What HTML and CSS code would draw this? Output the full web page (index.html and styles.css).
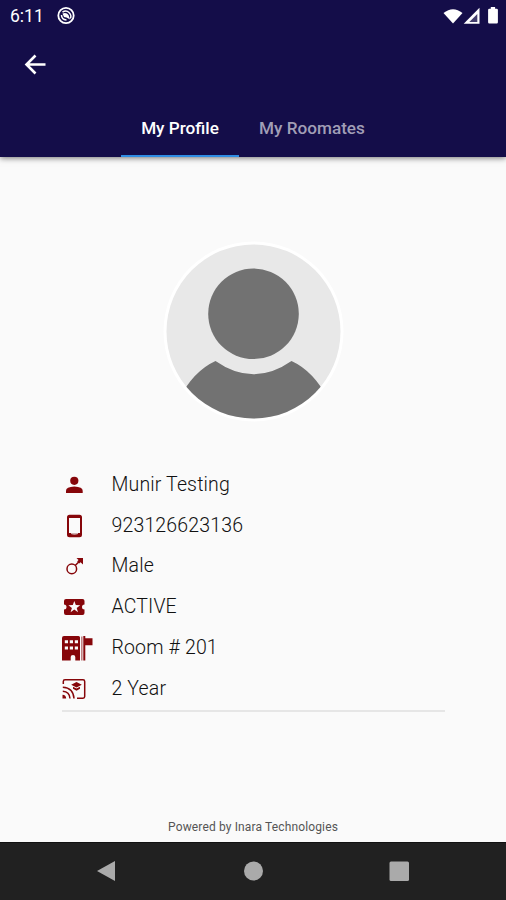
FILE: index.html
```html
<!DOCTYPE html>
<html lang="en">
<head>
<meta charset="utf-8">
<title>My Profile</title>
<link rel="stylesheet" href="styles.css">
</head>
<body>
<div class="screen">
  <header class="header">
    <div class="status">
      <span class="time">6:11</span>
      <svg class="status-app" width="20" height="20" viewBox="0 0 20 20"><circle cx="10" cy="9.500" r="7.700" fill="none" stroke="#fff" stroke-width="1.800"/><path d="M6.500 6.200Q10 3.500 13 6.500t1.300 6M5.500 9q0 4.500 5 5" fill="none" stroke="#fff" stroke-width="1.500"/><path d="M6.500 7.500q4-1.500 6 1.500l1.500 4.500-3.500-2-2.500-.5z" fill="#fff"/></svg>
      <svg class="signals" width="58" height="20" viewBox="0 0 58 20"><path d="M2.500 7Q12-.7 21.500 7L12 17.500z" fill="#fff"/><path d="M38.500 1.700v16H22.700z" fill="#fff"/><path d="M36.300 8v8h-8z" fill="#140d49" opacity=".8"/><path d="M49.800 1h4.300v1.800h1.600q1.200 0 1.200 1.200v12.300q0 1.200-1.200 1.200h-7.400q-1.200 0-1.200-1.200V4q0-1.200 1.200-1.200h1.500z" fill="#fff"/></svg>
    </div>
    <div class="toolbar">
      <svg width="24" height="24" viewBox="0 0 24 24"><path d="M22.500 12.500H4M12.500 3.500l-9 9 9 9" fill="none" stroke="#fff" stroke-width="2.600"/></svg>
    </div>
    <nav class="tabs">
      <div class="tab active"><span>My Profile</span></div>
      <div class="tab"><span>My Roomates</span></div>
    </nav>
  </header>
  <main class="main">
    <svg class="avatar" width="184" height="184" viewBox="0 0 184 184">
      <defs><clipPath id="disc"><circle cx="91.500" cy="92.500" r="87"/></clipPath></defs>
      <circle cx="91.500" cy="92.500" r="90" fill="#fff"/>
      <circle cx="91.500" cy="92.500" r="87" fill="#e8e8e8"/>
      <path clip-path="url(#disc)" d="M17 160Q31.500 132 53.500 122Q91.500 148.500 129.500 122Q151.500 132 166 160V184H17z" fill="#727272"/>
      <circle cx="91.500" cy="74.800" r="45.300" fill="#727272"/>
    </svg>
    <ul class="details">
      <li><svg class="icon" viewBox="0 0 34 30"><circle cx="14.300" cy="10.800" r="4.100"/><path d="M6 23v-2.200q0-4 8.300-4.400 8.400.4 8.400 4.400V23z"/></svg><span>Munir Testing</span></li>
      <li><svg class="icon" viewBox="0 0 34 30"><path fill-rule="evenodd" d="M9.500 3.800h10q2.500 0 2.500 2.500v17.500q0 2.500-2.500 2.500h-10Q7 26.300 7 23.800V6.300q0-2.500 2.500-2.500zM9 7v15h11V7z"/><path class="base" d="M11 22h7v1q-3.500 1.500-7 0z"/></svg><span>923126623136</span></li>
      <li><svg class="icon line" viewBox="0 0 34 30"><circle cx="11.800" cy="17.900" r="4.800"/><path d="m15.200 14.500 6-6"/><path class="solid" d="M16.500 7H23v6.500l-2.500-2.300-1.300 1.200-2-2 1.300-1.300z"/></svg><span>Male</span></li>
      <li><svg class="icon" viewBox="0 0 34 30"><path d="M6 7h16.500q2 0 2 2v3.500a2.500 2.500 0 0 0 0 5V21q0 2-2 2H6q-2 0-2-2v-3.500a2.500 2.500 0 0 0 0-5V9q0-2 2-2z"/><path class="cut" d="m14.300 9 1.500 4.100 4.400.1-3.500 2.700 1.300 4.300-3.700-2.600-3.700 2.600 1.300-4.300-3.500-2.700 4.400-.1z"/></svg><span>ACTIVE</span></li>
      <li><svg class="icon" viewBox="0 0 34 30"><path d="M4 3h14.500q1.500 0 1.500 1.500V27.500h-4.700V24q0-2-2.300-2t-2.300 2v3.500H2V5q0-2 2-2z"/><path class="cut" d="M4.800 7.300H8v3H4.800zm5 0H13v3H9.800zm5 0H18v3h-3.200zM4.800 13.500H8v3H4.800zm5 0H13v3H9.800zm5 0H18v3h-3.200z"/><path d="M21.500 3.500h.8v24h-.8zM23.300 3h2v2.200h7.200v7h-7.200v15.300h-2z"/></svg><span>Room # 201</span></li>
      <li><svg class="icon line" viewBox="0 0 34 30"><path d="M3.300 10V7.500q0-1.700 1.700-1.700h18q1.700 0 1.700 1.700v15q0 1.700-1.700 1.700h-6M2.800 13.200q10.500.5 11.200 11.300M2.800 17.300q6.700.5 7.200 7.200"/><path class="solid" d="M2.500 20.800q3.500.2 3.700 3.700H2.500zM16.500 8l5.300 2.700-5.300 2.800-5.300-2.800zM13 12.800l3.500 1.700 3.500-1.700v2l-3.500 2-3.500-2z"/></svg><span>2 Year</span></li>
    </ul>
    <footer class="credit">Powered by Inara Technologies</footer>
  </main>
  <nav class="navbar">
    <svg width="22" height="24" viewBox="0 0 22 24"><path d="M20 2v20L2 12z"/></svg>
    <svg width="22" height="24" viewBox="0 0 22 24"><circle cx="11.500" cy="12" r="9.500"/></svg>
    <svg width="22" height="24" viewBox="0 0 22 24"><rect x="1.500" y="2.500" width="19.500" height="19.500" rx="1.500"/></svg>
  </nav>
</div>
</body>
</html>
```
FILE: styles.css
```css
* { box-sizing: border-box; }
body { margin: 0; font-family: Roboto, "Liberation Sans", sans-serif; }
svg { display: block; flex: none; }
.screen { width: 506px; height: 900px; display: flex; flex-direction: column; background: #fafafa; overflow: hidden; }
.header { height: 157px; flex: none; background: #140d49; color: #fff; display: flex; flex-direction: column; box-shadow: 0 1px 6px rgba(0,0,0,.55); z-index: 1; }
.status { height: 32px; display: flex; align-items: center; padding: 0 7px 0 10px; }
.time { font-size: 17.5px; width: 46px; white-space: nowrap; }
.signals { margin-left: auto; }
.toolbar { height: 66px; padding: 20px 23px 0; }
.tabs { height: 59px; display: flex; justify-content: center; }
.tab { height: 59px; padding: 20px 0 0; font-size: 17.15px; line-height: 20px; font-weight: 500; color: #a19eb6; white-space: nowrap; width: 146px; }
.tab.active { width: 118px; color: #fff; border-bottom: 2px solid #2f8de4; }
.tab span { display: flex; justify-content: center; }
.main { flex: 1; display: flex; flex-direction: column; align-items: center; padding-top: 82px; }
.avatar { margin-left: 2px; }
.details { list-style: none; margin: 41px 61px 0 62px; padding: 0; width: 383px; height: 248px; border-bottom: 2px solid #e6e6e6; }
.details li { height: 40.75px; display: flex; align-items: center; font-size: 19.5px; font-weight: 300; letter-spacing: .15px; color: #111; white-space: nowrap; }
.icon { width: 34px; height: 30px; margin: 1px 17.5px 0 -2px; fill: #86060a; }
.line { fill: none; stroke: #86060a; stroke-width: 1.5; }
.solid { fill: #86060a; stroke: none; }
.cut { fill: #fafafa; }
.base { fill: #cfaeb0; }
.credit { margin-top: 108px; font-size: 12px; line-height: 14px; letter-spacing: .14px; color: #555; white-space: nowrap; }
.navbar { height: 58px; flex: none; background: #212121; border-top: 1px solid #111; display: flex; justify-content: space-between; align-items: center; padding: 0 96px 1px 95px; fill: #aaa; }
```
